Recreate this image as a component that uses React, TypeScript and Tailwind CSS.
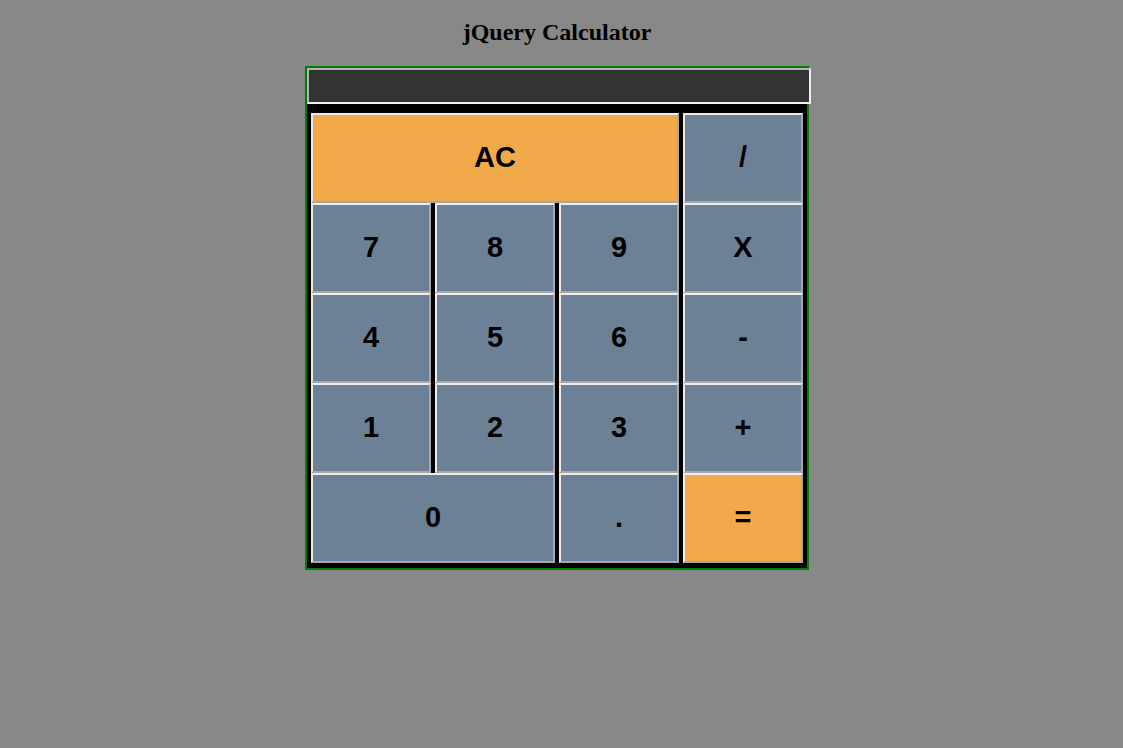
import React from 'react'

type Key = { label: string; span?: string; accent?: boolean }

const keys: Key[] = [
  { label: 'AC', span: 'col-span-3', accent: true },
  { label: '/' },
  { label: '7' },
  { label: '8' },
  { label: '9' },
  { label: 'X' },
  { label: '4' },
  { label: '5' },
  { label: '6' },
  { label: '-' },
  { label: '1' },
  { label: '2' },
  { label: '3' },
  { label: '+' },
  { label: '0', span: 'col-span-2' },
  { label: '.' },
  { label: '=', accent: true },
]

export default function App() {
  return (
    <div className="min-h-[748px] w-full bg-[#888888]">
      <div className="w-[1114px] flex flex-col items-center">
        {/* Title */}
        <h2 className="mt-[19px] mb-[20px] h-[27px] text-[24px] leading-[27px] font-bold text-black font-['Liberation_Serif',serif]">
          jQuery Calculator
        </h2>

        {/* Calculator body */}
        <div className="w-[504px] h-[504px] border-2 border-[#008000] bg-black">
          <input
            readOnly
            className="block w-[504px] h-[36px] bg-[#333333] border-2 border-t-[#b4b4b4] border-l-[#b4b4b4] border-b-[#f0f0f0] border-r-[#f0f0f0] outline-none text-white px-2 font-['Liberation_Sans',sans-serif]"
          />
          <div className="grid grid-cols-[repeat(4,120px)] auto-rows-[90px] gap-x-[4px] pt-[9px] px-[4px]">
            {keys.map((k) => (
              <button
                key={k.label}
                className={`${k.span ?? ''} ${k.accent ? 'bg-[#f1a94a]' : 'bg-[#6d8196]'} flex items-center justify-center border-2 border-t-[#ececec] border-l-[#ececec] border-b-[#a8a8a8] border-r-[#a8a8a8] text-[29px] font-bold text-black font-['Liberation_Sans',Arial,sans-serif]`}
              >
                {k.label}
              </button>
            ))}
          </div>
        </div>
      </div>
    </div>
  )
}
